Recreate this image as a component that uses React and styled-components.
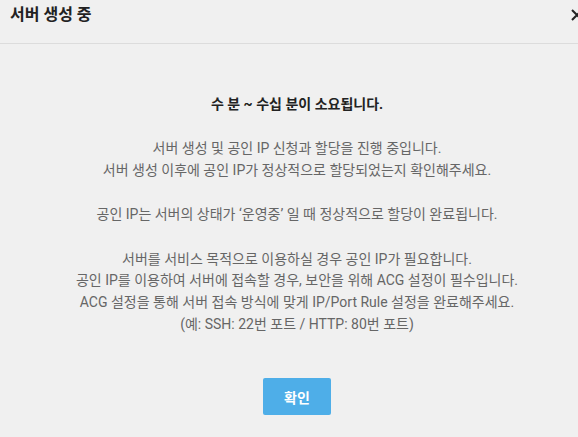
import React from 'react'
import styled, { createGlobalStyle } from 'styled-components'

const GlobalStyle = createGlobalStyle`
  html, body {
    margin: 0;
    padding: 0;
    background: #f0f0f0;
    overflow: hidden;
  }
  body {
    font-family: Roboto, "Noto Sans CJK KR", "Noto Sans", sans-serif;
  }
`

const Modal = styled.div`
  width: 594px;
  height: 437px;
  background: #f0f0f0;
  display: flex;
  flex-direction: column;
`

const Header = styled.header`
  height: 44px;
  box-sizing: border-box;
  border-bottom: 1px solid #dcdcdc;
  display: flex;
  align-items: flex-start;
  justify-content: space-between;
  padding: 4px 11px 0 10px;
`

const Title = styled.h1`
  margin: 0;
  font-size: 16px;
  font-weight: 700;
  line-height: 22px;
  color: #222;
`

const Close = styled.button`
  border: 0;
  background: none;
  padding: 0;
  margin-top: 5px;
  width: 12px;
  height: 12px;
  display: flex;
  cursor: pointer;
`

const Body = styled.div`
  display: flex;
  flex-direction: column;
  align-items: center;
  padding-top: 50px;
  text-align: center;
`

const Lead = styled.p`
  margin: 0 0 23px;
  font-size: 14px;
  font-weight: 700;
  line-height: 21px;
  color: #222;
`

const Para = styled.p`
  margin: 0 0 23px;
  font-size: 14px;
  line-height: 21.6px;
  color: #666;

  &:last-of-type {
    margin-bottom: 43px;
  }
`

const Confirm = styled.button`
  width: 68px;
  height: 37px;
  border: 0;
  border-radius: 2px;
  background: #4eaee8;
  color: #fff;
  font-family: inherit;
  font-size: 14px;
  font-weight: 700;
  cursor: pointer;
`

const paragraphs = [
  ['서버 생성 및 공인 IP 신청과 할당을 진행 중입니다.', '서버 생성 이후에 공인 IP가 정상적으로 할당되었는지 확인해주세요.'],
  ['공인 IP는 서버의 상태가 ‘운영중’ 일 때 정상적으로 할당이 완료됩니다.'],
  [
    '서버를 서비스 목적으로 이용하실 경우 공인 IP가 필요합니다.',
    '공인 IP를 이용하여 서버에 접속할 경우, 보안을 위해 ACG 설정이 필수입니다.',
    'ACG 설정을 통해 서버 접속 방식에 맞게 IP/Port Rule 설정을 완료해주세요.',
    '(예: SSH: 22번 포트 / HTTP: 80번 포트)'
  ]
]

const App = () => (
  <Modal>
    <GlobalStyle />
    <Header>
      <Title>서버 생성 중</Title>
      <Close aria-label='닫기'>
        <svg width='12' height='12' viewBox='0 0 12 12'>
          <path d='M1 1L11 11M11 1L1 11' stroke='#222' strokeWidth='2' />
        </svg>
      </Close>
    </Header>
    <Body>
      <Lead>수 분 ~ 수십 분이 소요됩니다.</Lead>
      {paragraphs.map((lines, i) => (
        <Para key={i}>
          {lines.map((line, j) => (
            <React.Fragment key={j}>
              {line}
              {j < lines.length - 1 && <br />}
            </React.Fragment>
          ))}
        </Para>
      ))}
      <Confirm>확인</Confirm>
    </Body>
  </Modal>
)

export default App
